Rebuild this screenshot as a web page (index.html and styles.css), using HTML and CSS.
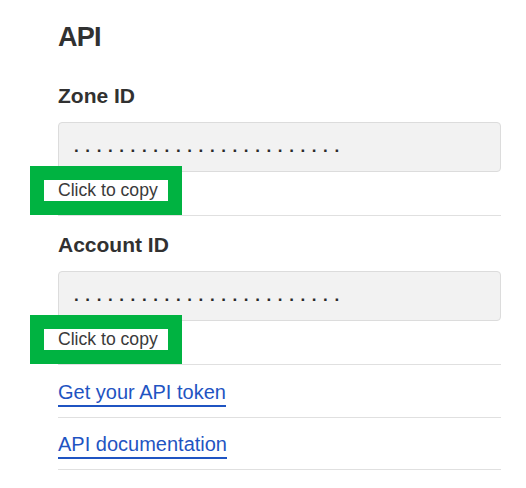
FILE: index.html
```html
<!DOCTYPE html>
<html lang="en">
<head>
<meta charset="utf-8">
<title>API</title>
<link rel="stylesheet" href="styles.css">
</head>
<body>
<div class="panel">
  <h1 class="title">API</h1>
  <div class="field">
    <div class="field-label">Zone ID</div>
    <div class="field-box">........................</div>
    <div class="copy">Click to copy</div>
  </div>
  <div class="field field-next">
    <div class="field-label">Account ID</div>
    <div class="field-box">........................</div>
    <div class="copy">Click to copy</div>
  </div>
  <div class="link-row"><a class="link" href="#">Get your API token</a></div>
  <div class="link-row link-row-last"><a class="link" href="#">API documentation</a></div>
</div>
</body>
</html>
```

FILE: styles.css
```css
html, body {
  margin: 0;
  padding: 0;
  background: #ffffff;
}

body {
  font-family: "Liberation Sans", Arial, sans-serif;
  color: #313131;
}

.panel {
  width: 443px;
  padding: 21px 0 0 58px;
}

.title {
  margin: 0 0 31px;
  font-size: 27px;
  line-height: 32px;
  font-weight: bold;
  letter-spacing: -0.8px;
}

.field {
  padding-bottom: 14px;
  border-bottom: 1px solid #e0e0e0;
}

.field-next {
  margin-top: 17px;
}

.field-label {
  font-size: 21px;
  line-height: 24px;
  font-weight: bold;
}

.field-box {
  margin-top: 14px;
  height: 50px;
  box-sizing: border-box;
  border: 1px solid #dcdcdc;
  border-radius: 4px;
  background: #f2f2f2;
  padding-left: 15px;
  font-size: 17px;
  font-weight: bold;
  line-height: 48px;
  letter-spacing: 6.6px;
  color: #2a2a2a;
  overflow: hidden;
  white-space: nowrap;
}

.copy {
  display: block;
  width: max-content;
  margin: 8px 0 0 -14px;
  padding: 0 10px 0 14px;
  background: #ffffff;
  font-size: 17.6px;
  line-height: 21px;
  color: #3a3a3a;
  outline: 14px solid #00b341;
}

.link-row {
  padding: 15px 0 10px;
  border-bottom: 1px solid #e0e0e0;
}

.link-row-last {
  padding-top: 14px;
}

.link {
  display: inline-block;
  font-size: 20px;
  line-height: 24px;
  color: #1f54c2;
  text-decoration: none;
  padding-bottom: 1px;
  border-bottom: 2px solid #1f54c2;
}
```
